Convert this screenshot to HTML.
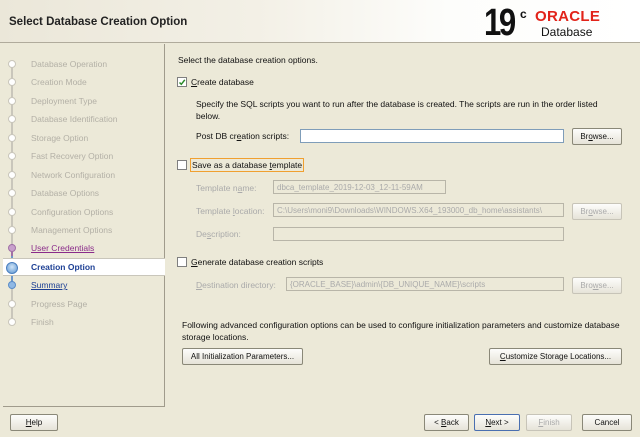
<!DOCTYPE html>
<html><head><style>
*{margin:0;padding:0;box-sizing:border-box}
body{width:640px;height:437px;background:#ece9d8;font-family:"Liberation Sans",sans-serif;font-size:8.5px;color:#111;position:relative;overflow:hidden}
.hdr{position:absolute;left:0;top:0;width:640px;height:43px;background:linear-gradient(90deg,#ebe7d9 0%,#f3f0e6 40%,#fdfdfb 70%,#fff 100%);border-bottom:1px solid #b0ab9c}
.title{position:absolute;left:9px;top:16px;font-size:11.5px;font-weight:bold;color:#222}
.side{position:absolute;left:3px;top:44px;width:162px;height:363px;border-right:1px solid #a09b8c;border-bottom:1px solid #a09b8c}
.line{position:absolute;left:11px;top:64px;width:2px;height:260px;background:#c9c6bb}
.it{position:absolute;left:31px;color:#b3b0a6;font-size:8.5px}
.dot{position:absolute;left:8px;width:8px;height:8px;border-radius:50%;background:#fff;border:1px solid #c9c6bb}
.a{position:absolute;color:#111;font-size:8.5px}
.g{color:#aaa}
.cb{position:absolute;width:10px;height:10px;border:1px solid #7f7f7f;background:#fff}
.inp{position:absolute;height:14px;border:1px solid #7f9db9;background:#fff}
.dis{border-color:#b8b5a8;background:#ece9d8;color:#aaa;font-size:8px;padding:2px 3px;white-space:nowrap;overflow:hidden}
.btn{position:absolute;height:17px;border:1px solid #8a8878;border-radius:2px;background:linear-gradient(#fdfdfb,#e6e3d8);font-size:8px;text-align:center;line-height:15px;color:#111}
.bd{color:#aaa;border-color:#c7c4b8}
u{text-decoration:underline}
</style></head><body>
<div class="hdr">
<div class="title">Select Database Creation Option</div>
<div style="position:absolute;left:484px;top:2px;font-size:38px;font-weight:bold;letter-spacing:-3px;color:#111;transform:scaleX(0.82);transform-origin:left top">19</div>
<div style="position:absolute;left:520px;top:7px;font-size:12px;font-weight:bold;color:#111">c</div>
<div style="position:absolute;left:535px;top:8px;font-size:15px;font-weight:bold;color:#e2231a;letter-spacing:0.3px">ORACLE</div>
<div style="position:absolute;left:541px;top:25px;font-size:12px;color:#111">Database</div>
</div>
<div class="side"></div>
<div class="line"></div>
<div style="position:absolute;left:11px;top:248px;width:2px;height:38px;background:#6d97c9"></div>
<div style="position:absolute;left:11px;top:244px;width:2px;height:12px;background:#a070a6"></div>
<div style="position:absolute;left:3px;top:258px;width:162px;height:18px;background:#fff;border-top:1px solid #c9c6bb;border-bottom:1px solid #c9c6bb"></div>
<div class="dot" style="top:60px"></div><div class="it" style="top:59px">Database Operation</div>
<div class="dot" style="top:78px"></div><div class="it" style="top:77px">Creation Mode</div>
<div class="dot" style="top:97px"></div><div class="it" style="top:96px">Deployment Type</div>
<div class="dot" style="top:115px"></div><div class="it" style="top:114px">Database Identification</div>
<div class="dot" style="top:134px"></div><div class="it" style="top:133px">Storage Option</div>
<div class="dot" style="top:152px"></div><div class="it" style="top:151px">Fast Recovery Option</div>
<div class="dot" style="top:171px"></div><div class="it" style="top:170px">Network Configuration</div>
<div class="dot" style="top:189px"></div><div class="it" style="top:188px">Database Options</div>
<div class="dot" style="top:208px"></div><div class="it" style="top:207px">Configuration Options</div>
<div class="dot" style="top:226px"></div><div class="it" style="top:225px">Management Options</div>
<div class="dot" style="top:244px;background:#c8a0cc;border-color:#a070a6"></div><div class="it" style="top:243px;color:#8a2b8a"><u>User Credentials</u></div>
<div class="dot" style="top:262px;left:6px;width:12px;height:12px;background:radial-gradient(circle at 50% 40%,#cfe4f7,#5a93d0);border-color:#4a7fbf"></div><div class="it" style="top:262px;color:#1c3f94;font-weight:bold">Creation Option</div>
<div class="dot" style="top:281px;background:#8fb8e4;border-color:#5a8cc8"></div><div class="it" style="top:280px;color:#1c3f94"><u>Summary</u></div>
<div class="dot" style="top:300px"></div><div class="it" style="top:299px">Progress Page</div>
<div class="dot" style="top:318px"></div><div class="it" style="top:317px">Finish</div>

<div class="a" style="left:178px;top:55px">Select the database creation options.</div>
<div class="cb" style="left:177px;top:77px"><svg width="8" height="8" style="position:absolute;left:0;top:0"><path d="M1.5 4.5 L3.3 6.3 L6.8 1.8" stroke="#2a8a2a" stroke-width="1.5" fill="none"/></svg></div>
<div class="a" style="left:191px;top:77px"><u>C</u>reate database</div>
<div class="a" style="left:196px;top:98px;line-height:12px;width:420px">Specify the SQL scripts you want to run after the database is created. The scripts are run in the order listed below.</div>
<div class="a" style="left:196px;top:131px">Post DB cr<u>e</u>ation scripts:</div>
<div class="inp" style="left:300px;top:129px;width:264px"></div>
<div class="btn" style="left:572px;top:128px;width:50px">Br<u>o</u>wse...</div>
<div class="cb" style="left:177px;top:160px"></div>
<div class="a" style="left:190px;top:158px;border:1px solid #f0a030;padding:1px 1px;">Save as a database <u>t</u>emplate</div>
<div class="a g" style="left:196px;top:183px">Template n<u>a</u>me:</div>
<div class="inp dis" style="left:273px;top:180px;width:173px">dbca_template_2019-12-03_12-11-59AM</div>
<div class="a g" style="left:196px;top:206px">Template <u>l</u>ocation:</div>
<div class="inp dis" style="left:273px;top:203px;width:291px">C:\Users\moni9\Downloads\WINDOWS.X64_193000_db_home\assistants\</div>
<div class="btn bd" style="left:572px;top:203px;width:50px">Br<u>o</u>wse...</div>
<div class="a g" style="left:196px;top:229px">De<u>s</u>cription:</div>
<div class="inp dis" style="left:273px;top:227px;width:291px"></div>
<div class="cb" style="left:177px;top:257px"></div>
<div class="a" style="left:191px;top:257px"><u>G</u>enerate database creation scripts</div>
<div class="a g" style="left:196px;top:280px"><u>D</u>estination directory:</div>
<div class="inp dis" style="left:286px;top:277px;width:278px">{ORACLE_BASE}\admin\{DB_UNIQUE_NAME}\scripts</div>
<div class="btn bd" style="left:572px;top:277px;width:50px">Bro<u>w</u>se...</div>
<div class="a" style="left:182px;top:319px;line-height:12px;width:440px">Following advanced configuration options can be used to configure initialization parameters and customize database storage locations.</div>
<div class="btn" style="left:182px;top:348px;width:121px">All Initialization Parameters...</div>
<div class="btn" style="left:489px;top:348px;width:133px"><u>C</u>ustomize Storage Locations...</div>

<div class="btn" style="left:10px;top:414px;width:48px"><u>H</u>elp</div>
<div class="btn" style="left:424px;top:414px;width:45px">&lt; <u>B</u>ack</div>
<div class="btn" style="left:474px;top:414px;width:46px;border-color:#4a6fb0"><u>N</u>ext &gt;</div>
<div class="btn bd" style="left:526px;top:414px;width:46px"><u>F</u>inish</div>
<div class="btn" style="left:582px;top:414px;width:50px">Cancel</div>
</body></html>
